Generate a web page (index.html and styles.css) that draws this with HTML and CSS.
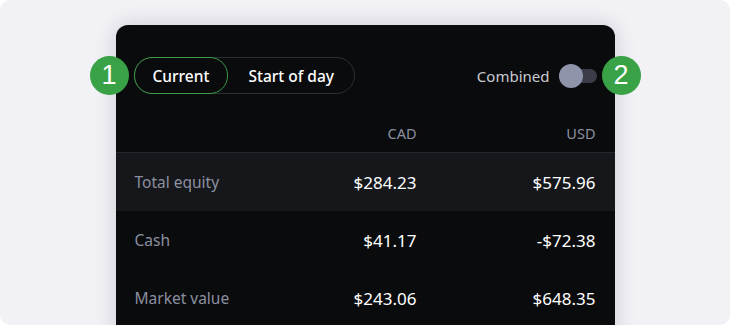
FILE: index.html
```html
<!DOCTYPE html>
<html lang="en">
<head>
    <meta charset="UTF-8">
    <title>Balances</title>
    <link rel="stylesheet" href="styles.css">
</head>
<body>

    <div class="frame">
        <div class="card">
            <div class="toolbar">
                <div class="segmented">
                    <div class="segment active">Current</div>
                    <div class="segment">Start of day</div>
                </div>
                <div class="combined">
                    <span class="combined-label">Combined</span>
                    <span class="toggle"><span class="knob"></span></span>
                </div>
                <div class="badge badge-left">1</div>
                <div class="badge badge-right">2</div>
            </div>

            <div class="row head">
                <div></div>
                <div class="num">CAD</div>
                <div class="num">USD</div>
            </div>
            <div class="row highlight">
                <div class="label">Total equity</div>
                <div class="num value">$284.23</div>
                <div class="num value">$575.96</div>
            </div>
            <div class="row">
                <div class="label">Cash</div>
                <div class="num value">$41.17</div>
                <div class="num value">-$72.38</div>
            </div>
            <div class="row">
                <div class="label">Market value</div>
                <div class="num value">$243.06</div>
                <div class="num value">$648.35</div>
            </div>
        </div>
    </div>

</body>
</html>
```

FILE: styles.css
```css
body {
    margin: 0;
    padding: 0;
    background-color: #fff;
    font-family: 'Noto Sans', 'Open Sans', sans-serif;
}

.frame {
    width: 730px;
    height: 325px;
    background-color: #f1f1f6;
    border-radius: 10px;
    overflow: hidden;
    display: flex;
    justify-content: center;
    padding-top: 25px;
    box-sizing: border-box;
}

.card {
    width: 499px;
    height: 330px;
    flex-shrink: 0;
    background-color: #0a0b0d;
    border-radius: 12px 12px 0 0;
    box-shadow: 0 0 22px rgba(20, 20, 40, 0.16);
}

.toolbar {
    position: relative;
    display: flex;
    align-items: center;
    justify-content: space-between;
    padding: 32px 18px 0 18px;
}

.segmented {
    display: flex;
    height: 37px;
    box-sizing: border-box;
    border: 1px solid #2c2f35;
    border-radius: 19px;
}

.segment {
    display: flex;
    align-items: center;
    padding: 0 20px 0 20px;
    color: #fff;
    font-size: 15.5px;
    font-weight: 500;
}

.segment.active {
    border: 1px solid #3b9a47;
    border-radius: 18px;
    margin: -1px 0 -1px -1px;
    padding: 0 18px;
}

.combined {
    display: flex;
    align-items: center;
    gap: 9px;
}

.combined-label {
    color: #c9cbd1;
    font-size: 15px;
}

.toggle {
    position: relative;
    width: 38px;
    height: 14px;
    background-color: #3a3d47;
    border-radius: 7px;
}

.knob {
    position: absolute;
    left: 0;
    top: -5px;
    width: 24px;
    height: 24px;
    border-radius: 50%;
    background-color: #8f94ab;
}

.badge {
    position: absolute;
    top: 31px;
    width: 39px;
    height: 39px;
    border-radius: 50%;
    background-color: #3aa246;
    color: #fff;
    font-family: 'Liberation Sans', Arial, sans-serif;
    font-size: 27px;
    display: flex;
    align-items: center;
    justify-content: center;
}

.badge-left {
    left: -26px;
}

.badge-right {
    right: -26px;
}

.row {
    display: grid;
    grid-template-columns: 1fr 180px 179px;
    align-items: center;
    height: 58px;
    padding: 0 19px;
}

.row.head {
    height: 59px;
    align-items: end;
    padding-bottom: 9px;
    box-sizing: border-box;
    border-bottom: 1px solid #24272d;
    color: #8b90a0;
    font-size: 14.5px;
}

.row.highlight {
    background-color: #16171b;
}

.label {
    color: #8b90a0;
    font-size: 15.5px;
}

.num {
    text-align: right;
}

.value {
    color: #fff;
    font-size: 17px;
}
```
